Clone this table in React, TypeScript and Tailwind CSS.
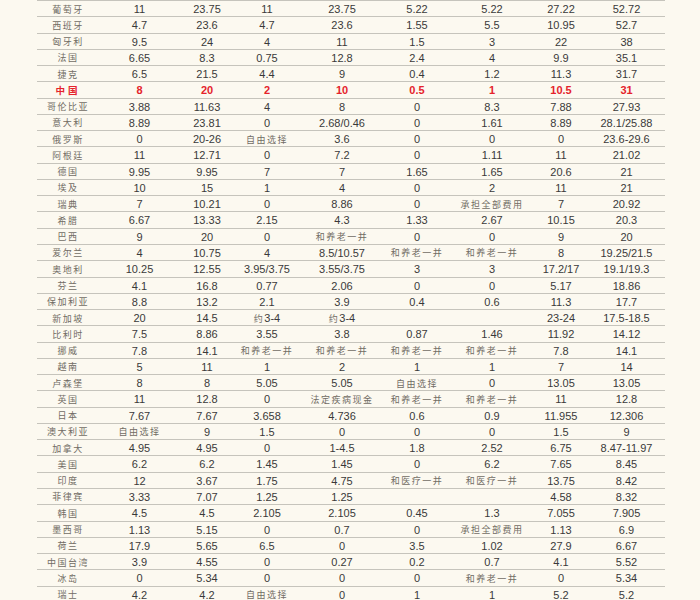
import React from 'react'

const rows: string[][] = [
  ['葡萄牙', '11', '23.75', '11', '23.75', '5.22', '5.22', '27.22', '52.72'],
  ['西班牙', '4.7', '23.6', '4.7', '23.6', '1.55', '5.5', '10.95', '52.7'],
  ['匈牙利', '9.5', '24', '4', '11', '1.5', '3', '22', '38'],
  ['法国', '6.65', '8.3', '0.75', '12.8', '2.4', '4', '9.9', '35.1'],
  ['捷克', '6.5', '21.5', '4.4', '9', '0.4', '1.2', '11.3', '31.7'],
  ['中国', '8', '20', '2', '10', '0.5', '1', '10.5', '31'],
  ['哥伦比亚', '3.88', '11.63', '4', '8', '0', '8.3', '7.88', '27.93'],
  ['意大利', '8.89', '23.81', '0', '2.68/0.46', '0', '1.61', '8.89', '28.1/25.88'],
  ['俄罗斯', '0', '20-26', '自由选择', '3.6', '0', '0', '0', '23.6-29.6'],
  ['阿根廷', '11', '12.71', '0', '7.2', '0', '1.11', '11', '21.02'],
  ['德国', '9.95', '9.95', '7', '7', '1.65', '1.65', '20.6', '21'],
  ['埃及', '10', '15', '1', '4', '0', '2', '11', '21'],
  ['瑞典', '7', '10.21', '0', '8.86', '0', '承担全部费用', '7', '20.92'],
  ['希腊', '6.67', '13.33', '2.15', '4.3', '1.33', '2.67', '10.15', '20.3'],
  ['巴西', '9', '20', '0', '和养老一并', '0', '0', '9', '20'],
  ['爱尔兰', '4', '10.75', '4', '8.5/10.57', '和养老一并', '和养老一并', '8', '19.25/21.5'],
  ['奥地利', '10.25', '12.55', '3.95/3.75', '3.55/3.75', '3', '3', '17.2/17', '19.1/19.3'],
  ['芬兰', '4.1', '16.8', '0.77', '2.06', '0', '0', '5.17', '18.86'],
  ['保加利亚', '8.8', '13.2', '2.1', '3.9', '0.4', '0.6', '11.3', '17.7'],
  ['新加坡', '20', '14.5', '约 3-4', '约 3-4', '', '', '23-24', '17.5-18.5'],
  ['比利时', '7.5', '8.86', '3.55', '3.8', '0.87', '1.46', '11.92', '14.12'],
  ['挪威', '7.8', '14.1', '和养老一并', '和养老一并', '和养老一并', '和养老一并', '7.8', '14.1'],
  ['越南', '5', '11', '1', '2', '1', '1', '7', '14'],
  ['卢森堡', '8', '8', '5.05', '5.05', '自由选择', '0', '13.05', '13.05'],
  ['英国', '11', '12.8', '0', '法定疾病现金', '和养老一并', '和养老一并', '11', '12.8'],
  ['日本', '7.67', '7.67', '3.658', '4.736', '0.6', '0.9', '11.955', '12.306'],
  ['澳大利亚', '自由选择', '9', '1.5', '0', '0', '0', '1.5', '9'],
  ['加拿大', '4.95', '4.95', '0', '1-4.5', '1.8', '2.52', '6.75', '8.47-11.97'],
  ['美国', '6.2', '6.2', '1.45', '1.45', '0', '6.2', '7.65', '8.45'],
  ['印度', '12', '3.67', '1.75', '4.75', '和医疗一并', '和医疗一并', '13.75', '8.42'],
  ['菲律宾', '3.33', '7.07', '1.25', '1.25', '', '', '4.58', '8.32'],
  ['韩国', '4.5', '4.5', '2.105', '2.105', '0.45', '1.3', '7.055', '7.905'],
  ['墨西哥', '1.13', '5.15', '0', '0.7', '0', '承担全部费用', '1.13', '6.9'],
  ['荷兰', '17.9', '5.65', '6.5', '0', '3.5', '1.02', '27.9', '6.67'],
  ['中国台湾', '3.9', '4.55', '0', '0.27', '0.2', '0.7', '4.1', '5.52'],
  ['冰岛', '0', '5.34', '0', '0', '0', '和养老一并', '0', '5.34'],
  ['瑞士', '4.2', '4.2', '自由选择', '0', '1', '1', '5.2', '5.2'],
]

// split a cell into CJK runs and latin runs so the two can be styled apart
function Cell({ text, red }: { text: string; red: boolean }) {
  const parts = text.match(/[\u4e00-\u9fff]+|[^\u4e00-\u9fff]+/g) ?? []
  return (
    <div className="flex items-center justify-center whitespace-nowrap">
      {parts.map((p, i) =>
        /[\u4e00-\u9fff]/.test(p) ? (
          <span
            key={i}
            className={
              red
                ? "font-['Noto_Sans_CJK_SC',sans-serif] text-[9.5px] font-bold tracking-[3px] text-[#e5232b]"
                : "font-['Noto_Sans_CJK_SC',sans-serif] text-[9px] tracking-[1.5px] text-[#716c64]"
            }
          >
            {p}
          </span>
        ) : (
          <span
            key={i}
            className={
              red
                ? "font-['Liberation_Sans',Arial,sans-serif] text-[11px] font-bold text-[#e5232b]"
                : "font-['Liberation_Sans',Arial,sans-serif] text-[11px] text-[#3a3a3a]"
            }
          >
            {p}
          </span>
        )
      )}
    </div>
  )
}

export default function App() {
  return (
    <div className="w-[700px] h-[600px] overflow-hidden bg-[#fcf9f0]">
      <div className="ml-[37px] w-[628px] border-t border-[#c6c4bc]">
        {rows.map((row, r) => {
          const red = row[0] === '中国'
          return (
            <div
              key={r}
              className="grid grid-cols-[62px_81px_54px_66px_84px_66px_84px_54px_77px] h-[16.28px] border-b border-[#c6c4bc]"
            >
              {row.map((c, i) => (
                <Cell key={i} text={c} red={red} />
              ))}
            </div>
          )
        })}
      </div>
    </div>
  )
}
